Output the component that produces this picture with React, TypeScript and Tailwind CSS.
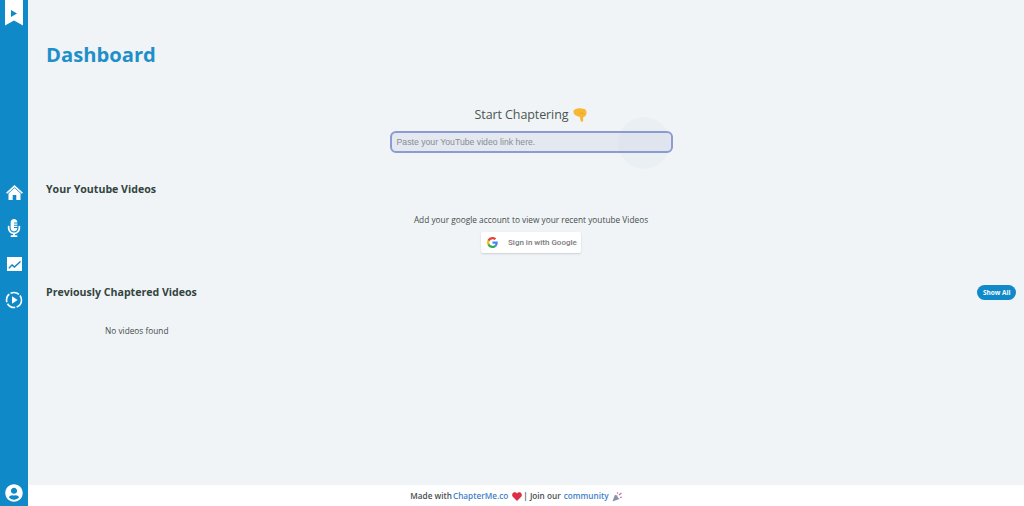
import { FaMicrophoneAlt, FaUserCircle } from 'react-icons/fa'

function BookmarkLogo() {
  return (
    <svg width="18" height="26" viewBox="0 0 18 26">
      <path d="M0 0H18V25.5L9 20.5L0 25.5Z" fill="#fff" />
      <path d="M6 10L12 13.500L6 17Z" fill="#1089c9" />
    </svg>
  )
}

function HomeIcon() {
  return (
    <svg width="17" height="15" viewBox="0 0 17 15">
      <path d="M8.500 0L17 7.800L15.800 8.800L8.500 2.200L1.200 8.800L0 7.800Z" fill="#fff" />
      <path d="M8.500 3L14.500 8.400V15H10.300V10H6.700V15H2.500V8.400Z" fill="#fff" />
    </svg>
  )
}

function ChartIcon() {
  return (
    <svg width="15" height="14" viewBox="0 0 15 14">
      <path
        d="M0 0H15V14H0Z M1.500 10.500L5 7L7.500 9L13.500 3.500L13.500 5.500L7.500 11L5 9L2 12Z"
        fill="#fff"
        fillRule="evenodd"
      />
    </svg>
  )
}

function PlayRing() {
  return (
    <svg width="18" height="18" viewBox="0 0 18 18" fill="none">
      <circle cx="9" cy="9" r="7.500" stroke="#fff" strokeWidth="1.600" strokeDasharray="9 1.500" />
      <path d="M7 5.200L12.600 9L7 12.800Z" fill="#fff" />
    </svg>
  )
}

function HandDown() {
  return (
    <svg width="14" height="14" viewBox="0 0 14 14">
      <path
        d="M1 2C3 0.500 6 0 8.500 0.500L11.500 1C13.500 2 14 4.500 13 7C12 8.500 10.800 9 10 9.500L10.200 12.500C9.900 14.200 8 14.200 7.600 12.800L6.800 8.800C4.500 8.500 2 7.500 1 5.800C0.300 4.500 0.300 3 1 2Z"
        fill="#f7b733"
      />
      <path d="M7 5.500C8 5 9.500 5 10.500 5.500" stroke="#e79a20" strokeWidth="0.800" fill="none" />
    </svg>
  )
}

function Heart() {
  return (
    <svg width="10" height="9" viewBox="0 0 10 9">
      <path d="M5 9L0.800 4.800C-0.500 3.200 0.200 0.600 2.400 0.300C3.500 0.200 4.400 0.700 5 1.600C5.600 0.700 6.500 0.200 7.600 0.300C9.800 0.600 10.500 3.200 9.200 4.800Z" fill="#dd2e44" />
    </svg>
  )
}

function Popper() {
  return (
    <svg width="10" height="10" viewBox="0 0 10 10">
      <path d="M0.500 9.500L3 2.500L7.500 7Z" fill="#8b8fa8" />
      <path d="M5 1.500L6 0.500M7 3L9.500 1M8 5.500L9.800 5" stroke="#c06fa0" strokeWidth="1.100" />
      <circle cx="4.800" cy="4" r="0.800" fill="#6b86c9" />
    </svg>
  )
}

function GoogleG() {
  return (
    <svg width="11" height="11" viewBox="0 0 48 48">
      <path fill="#EA4335" d="M24 9.500c3.500 0 6.700 1.200 9.200 3.600l6.900-6.900C35.900 2.400 30.500 0 24 0 14.600 0 6.500 5.400 2.600 13.200l8 6.200C12.500 13.700 17.800 9.500 24 9.500z" />
      <path fill="#4285F4" d="M46.900 24.500c0-1.600-.1-3.100-.4-4.500H24v9h12.900c-.6 3-2.200 5.500-4.700 7.200l7.700 6c4.500-4.200 7-10.300 7-17.700z" />
      <path fill="#FBBC05" d="M10.500 28.600C10 27.200 9.800 25.600 9.800 24s.3-3.200.8-4.600l-8-6.200C.9 16.500 0 20.100 0 24s.9 7.500 2.600 10.800l7.900-6.200z" />
      <path fill="#34A853" d="M24 48c6.500 0 11.900-2.100 15.900-5.800l-7.700-6c-2.200 1.500-5 2.300-8.200 2.300-6.200 0-11.500-4.200-13.400-9.900l-8 6.200C6.500 42.600 14.600 48 24 48z" />
    </svg>
  )
}

export default function App() {
  return (
    <div className="flex h-[506px] w-[1024px] overflow-hidden bg-[#f0f4f6] font-['Open_Sans',sans-serif] text-[#3c4a45]">
      {/* Sidebar */}
      <aside className="flex w-[28px] shrink-0 flex-col items-center bg-[#1089c9] pb-[4px] text-white">
        <div className="h-[26px]">
          <BookmarkLogo />
        </div>
        <nav className="mt-[157px] flex flex-col items-center">
          <div className="flex h-[18px] items-center justify-center">
            <HomeIcon />
          </div>
          <div className="mt-[18px] flex h-[18px] items-center justify-center">
            <FaMicrophoneAlt size={18} />
          </div>
          <div className="mt-[18px] flex h-[18px] items-center justify-center">
            <ChartIcon />
          </div>
          <div className="mt-[18px] flex h-[18px] items-center justify-center">
            <PlayRing />
          </div>
        </nav>
        <div className="mt-auto">
          <FaUserCircle size={18} />
        </div>
      </aside>

      <div className="flex min-w-0 flex-1 flex-col">
        <main className="relative flex-1 pl-[18px] pr-[8px] pt-[39px]">
          <h1 className="text-[20.2px] leading-[30px] font-bold text-[#1f8fc9]">Dashboard</h1>

          <div className="mt-[36px] flex flex-col items-center">
            <div className="flex h-[20px] items-center gap-[5px] text-[12.5px] tracking-[-0.1px] text-[#4a5553]">
              Start Chaptering <HandDown />
            </div>
            <div className="relative mt-[6px] h-[22px] w-[283px] rounded-[6px] border-2 border-[#8c9bd0] bg-[#e4e8f0] pl-[5px] font-['Liberation_Sans',sans-serif] text-[8.7px] leading-[18px] text-[#878d92]">
              Paste your YouTube video link here.
              <div className="absolute left-[226px] top-[-16px] h-[52px] w-[52px] rounded-full bg-[#8c9bd0]/5" />
            </div>
          </div>

          <h2 className="mt-[28px] text-[10.6px] leading-[16px] font-bold text-[#33443f]">Your Youtube Videos</h2>

          <div className="mt-[16px] flex flex-col items-center">
            <p className="text-[8.3px] leading-[14px] text-[#454d4c]">Add your google account to view your recent youtube Videos</p>
            <div className="mt-[5px] flex h-[21px] w-[100px] items-center rounded-[2px] bg-white pl-[6px] font-['Roboto',sans-serif] text-[8px] font-medium text-[#7a7a7a] shadow-[0_1px_2px_rgba(0,0,0,0.15)]">
              <GoogleG />
              <span className="ml-[10px]">Sign in with Google</span>
            </div>
          </div>

          <div className="mt-[31px] flex h-[16px] items-center justify-between">
            <h2 className="text-[10.6px] leading-[16px] font-bold text-[#33443f]">Previously Chaptered Videos</h2>
            <span className="rounded-full bg-[#1089c9] px-[5.5px] py-[2px] text-[6.5px] leading-[11px] font-bold text-white">Show All</span>
          </div>

          <p className="mt-[24px] ml-[59px] text-[8.3px] leading-[14px] text-[#454d4c]">No videos found</p>
        </main>

        <footer className="flex h-[21px] items-center justify-center bg-white pr-[20px] pt-[2px] text-[8.2px] font-semibold text-[#4a4f52]">
          <span>Made with</span>
          <span className="ml-[1px] text-[#3f7fc9]">ChapterMe.co</span>
          <span className="ml-[4px]"><Heart /></span>
          <span className="ml-[1px]">| Join our</span>
          <span className="ml-[3px] text-[#3f7fc9]">community</span>
          <span className="ml-[3px]"><Popper /></span>
        </footer>
      </div>
    </div>
  )
}
